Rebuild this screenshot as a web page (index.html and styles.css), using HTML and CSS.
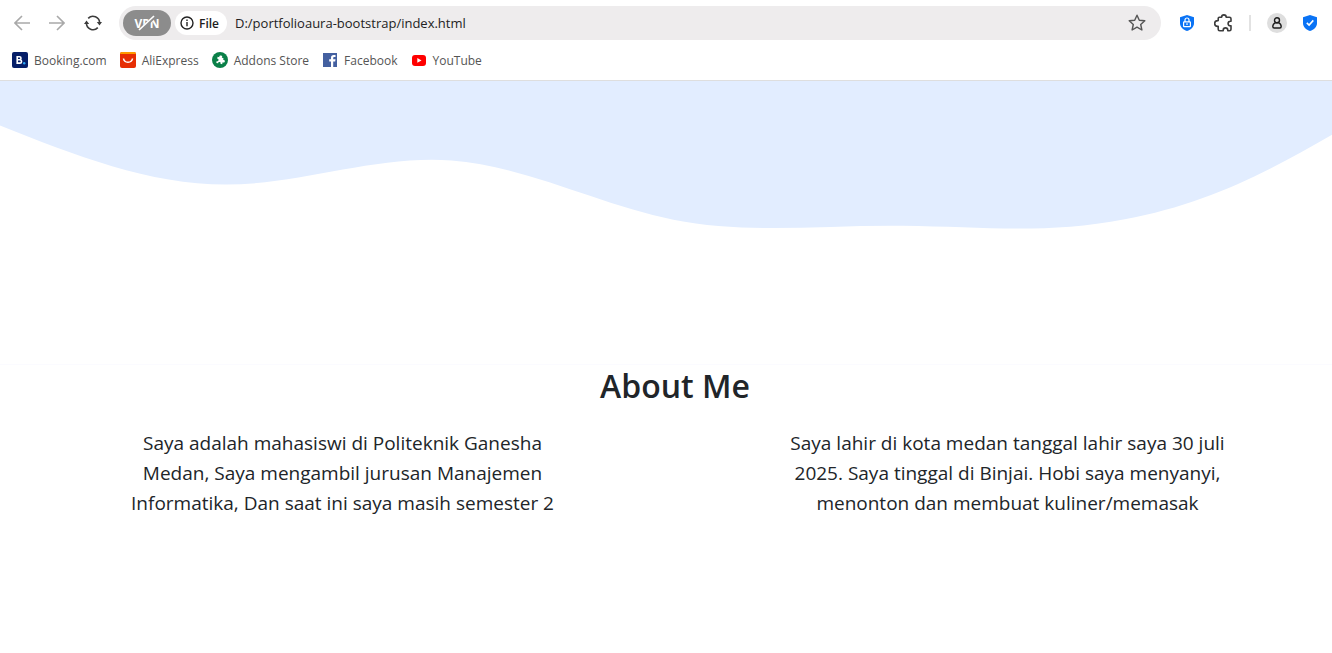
FILE: index.html
```html
<!DOCTYPE html>
<html lang="id">
<head>
<meta charset="utf-8">
<title>Portfolio</title>
<link rel="stylesheet" href="styles.css">
</head>
<body>
<header class="browser">
  <div class="toolbar">
    <nav class="nav-buttons" aria-label="Navigation">
      <button class="icon-btn" aria-label="Back"><svg width="16" height="16" viewBox="0 0 16 16" fill="none" stroke="#a9a9a9" stroke-width="1.6"><path d="M16 8H1M8 1L1 8l7 7"/></svg></button>
      <button class="icon-btn" aria-label="Forward"><svg width="16" height="16" viewBox="0 0 16 16" fill="none" stroke="#a9a9a9" stroke-width="1.6"><path d="M0 8h15M8 1l7 7-7 7"/></svg></button>
      <button class="icon-btn" aria-label="Reload"><svg width="18" height="16" viewBox="0 0 18 16"><path d="M4.200 3.400A6.600 6.600 0 0 1 15.600 8M13.800 12.600A6.600 6.600 0 0 1 2.400 8" fill="none" stroke="#3c3c3c" stroke-width="1.600"/><path d="M12.800 7h5.200l-2.500 3.400zM0 9h5.200L2.500 5.600z" fill="#3c3c3c"/></svg></button>
    </nav>
    <div class="address">
      <button class="vpn" aria-label="VPN off"><span>VPN</span><svg class="slash" width="20" height="16" viewBox="0 0 20 16"><path d="M4 15L17 2" stroke="#8c8c8c" stroke-width="3.600"/><path d="M2 15L17 1" stroke="#fff" stroke-width="1.700"/></svg></button>
      <button class="file"><svg width="14" height="14" viewBox="0 0 14 14" fill="none" stroke="#222" stroke-width="1.4"><circle cx="7" cy="7" r="6"/><path d="M7 6v4.2M7 3.6v1.5"/></svg>File</button>
      <input class="url" type="text" value="D:/portfolioaura-bootstrap/index.html" aria-label="Address">
      <button class="icon-btn" aria-label="Bookmark"><svg width="18" height="18" viewBox="0 0 18 18" fill="none" stroke="#555" stroke-width="1.4" stroke-linejoin="round"><path d="M9 1.200l2.300 5 5.500.6-4.100 3.700 1.200 5.500L9 13.200 4.100 16l1.200-5.500L1.200 6.800l5.500-.6z"/></svg></button>
    </div>
    <div class="actions">
      <button class="icon-btn privacy" aria-label="Privacy"><svg width="14" height="16" viewBox="0 0 14 16"><path d="M7 0l7 2.200V8c0 4-3 6.600-7 8-4-1.400-7-4-7-8V2.200z" fill="#0a73f5"/><path d="M5 7V5a2 2 0 0 1 4 0v2" fill="none" stroke="#fff" stroke-width="1.200"/><rect x="3.600" y="6.800" width="6.800" height="4.800" rx=".6" fill="none" stroke="#fff" stroke-width="1.200"/><path d="M7 8.300v1.800" stroke="#fff" stroke-width="1.200"/></svg></button>
      <button class="icon-btn" aria-label="Extensions"><svg width="19" height="18" viewBox="0 0 19 18" fill="none" stroke="#3c3c3c" stroke-width="1.600" stroke-linejoin="round"><path d="M4.200 6.600V4.400q0-1.200 1.200-1.200h2.200a2.300 2.300 0 0 1 4.600 0h3.200q1.600 0 1.600 1.600v2.400h-.6a2.300 2.300 0 0 0 0 4.600h.6v3.400q0 1.600-1.600 1.600h-1.600v-.6a2.300 2.300 0 0 0-4.600 0v.6H5.800q-1.600 0-1.600-1.600v-2.800h-.6a2.900 2.900 0 0 1 0-5.800z"/></svg></button>
      <span class="divider"></span>
      <button class="icon-btn profile" aria-label="Profile"><svg width="10" height="12" viewBox="0 0 10 12" fill="none" stroke="#1d1d1d" stroke-width="1.400"><circle cx="5" cy="3.300" r="2.500"/><path d="M3.200 5.800C1.500 6.500.8 8 .8 9.500c0 1 .5 1.500 1.400 1.500h5.600c.9 0 1.400-.5 1.400-1.500 0-1.500-.7-3-2.400-3.700z"/></svg></button>
      <button class="icon-btn" aria-label="Protection"><svg width="14" height="16" viewBox="0 0 14 16"><path d="M7 0l7 2.200V8c0 4-3 6.600-7 8-4-1.400-7-4-7-8V2.200z" fill="#0a73f5"/><path d="M3.800 7.800l2.300 2.200 4.200-4.600" fill="none" stroke="#fff" stroke-width="1.600"/></svg></button>
    </div>
  </div>
  <nav class="bookmarks" aria-label="Bookmarks">
    <a href="#"><svg width="16" height="16" viewBox="0 0 16 16"><rect width="16" height="16" rx="2" fill="#051e68"/><path d="M5.200 4.700h2.300a1.500 1.500 0 0 1 0 3H5.200zM5.200 7.700h2.600a1.700 1.700 0 0 1 0 3.400H5.200z" fill="none" stroke="#fff" stroke-width="1.600"/><circle cx="12.200" cy="11.200" r="1.200" fill="#2aa5f5"/></svg>Booking.com</a>
    <a href="#"><svg width="16" height="16" viewBox="0 0 16 16"><rect width="16" height="16" rx="2" fill="#e62e04"/><path d="M0 2a2 2 0 0 1 2-2h12a2 2 0 0 1 2 2z" fill="#ff9a00"/><path d="M3.500 6.500c.8 5 8.200 5 9 0" fill="none" stroke="#fff" stroke-width="1.500"/></svg>AliExpress</a>
    <a href="#"><svg width="16" height="16" viewBox="0 0 16 16"><circle cx="8" cy="8" r="8" fill="#0a8048"/><path transform="rotate(12 8 8)" d="M5 5.400h1.700a1.400 1.400 0 1 1 2.600 0H11v1.800a1.400 1.400 0 1 1 0 2.500v1.900H9.200a1.200 1.200 0 1 0-2.300 0H5V9.600a1.200 1.200 0 1 0 0-2.300z" fill="#fff"/></svg>Addons Store</a>
    <a href="#"><svg width="16" height="16" viewBox="0 0 16 16"><path d="M1 1h14v14H1z" fill="#4460a0"/><path d="M9 15V9.500H7.200V7.300H9V5.800C9 3.900 10 3 11.800 3H13.500v2h-1.200c-.8 0-1.100.4-1.100 1.100v1.200h2.300l-.3 2.200h-2V15z" fill="#fff"/></svg>Facebook</a>
    <a href="#"><svg width="16" height="16" viewBox="0 0 16 16"><rect x="1" y="3" width="14" height="11" rx="3" fill="#f00"/><path d="M6.300 6v4.800l4.200-2.400z" fill="#fff"/></svg>YouTube</a>
  </nav>
</header>
<main>
  <svg class="wave" viewBox="0 0 1440 160" aria-hidden="true"><path fill="#e2edff" d="M0 48C80 80 162 112 244 112S406 80 488 86C568 92 648 134 728 150S888 155.500 976 156.500S1130 166 1216 149.500S1366 101 1440 58V0H0z"/></svg>
  <section class="about" id="about">
    <h2>About Me</h2>
    <div class="columns">
      <p>Saya adalah mahasiswi di Politeknik Ganesha Medan, Saya mengambil jurusan Manajemen Informatika, Dan saat ini saya masih semester 2</p>
      <p>Saya lahir di kota medan tanggal lahir saya 30 juli 2025. Saya tinggal di Binjai. Hobi saya menyanyi, menonton dan membuat kuliner/memasak</p>
    </div>
  </section>
</main>
</body>
</html>
```
FILE: styles.css
```css
* { box-sizing: border-box; }
body {
  margin: 0;
  background: #fff;
  color: #212529;
  font-family: "Open Sans", "Noto Sans", sans-serif;
}
button { border: 0; padding: 0; background: none; font: inherit; }
svg { display: block; flex: none; }
.browser { border-bottom: 1px solid #dedede; }
.toolbar {
  display: flex;
  align-items: center;
  gap: 17px;
  padding: 6px 14px 0;
}
.nav-buttons, .actions { display: flex; align-items: center; }
.nav-buttons { gap: 19px; }
.icon-btn { display: grid; place-items: center; }
.address {
  flex: 1;
  display: flex;
  align-items: center;
  gap: 4px;
  height: 34px;
  padding: 0 15px 0 4px;
  border-radius: 17px;
  background: #eeeced;
}
.vpn {
  position: relative;
  width: 48px;
  height: 26px;
  border-radius: 13px;
  background: #8c8c8c;
  color: #fff;
  font-size: 12px;
  font-weight: 700;
}
.slash { position: absolute; left: 14px; top: 5px; }
.file {
  display: flex;
  align-items: center;
  gap: 5px;
  height: 24px;
  padding: 0 8px 0 5px;
  border-radius: 12px;
  background: #fff;
  color: #1d1d1d;
  font-size: 12px;
  font-weight: 600;
}
.url {
  flex: 1;
  min-width: 0;
  border: 0;
  padding: 0 4px;
  background: none;
  color: #222;
  font: 13px "Open Sans", sans-serif;
}
.actions { gap: 16px; margin-right: 1px; }
.privacy { margin: 0 4px 0 2px; }
.divider { width: 2px; height: 16px; background: #e2e2e2; }
.profile { width: 20px; height: 20px; border-radius: 50%; background: #dedede; }
.bookmarks {
  display: flex;
  gap: 13px;
  height: 40px;
  padding: 0 12px;
  align-items: center;
}
.bookmarks a {
  display: flex;
  align-items: center;
  gap: 6px;
  color: #555;
  font-size: 12px;
  text-decoration: none;
}
.wave { width: 100%; height: auto; }
.about {
  margin-top: 135px;
  padding: 2px 0 112px 18px;
  border-top: 1px solid #fbfbff;
  text-align: center;
}
h2 { margin: 0 0 23px; font-size: 32px; line-height: 38px; font-weight: 600; }
.columns { display: grid; grid-template-columns: 1fr 1fr; gap: 16px; }
p { width: 444px; max-width: 100%; margin: 0 auto; font-size: 19px; line-height: 30px; }
```
